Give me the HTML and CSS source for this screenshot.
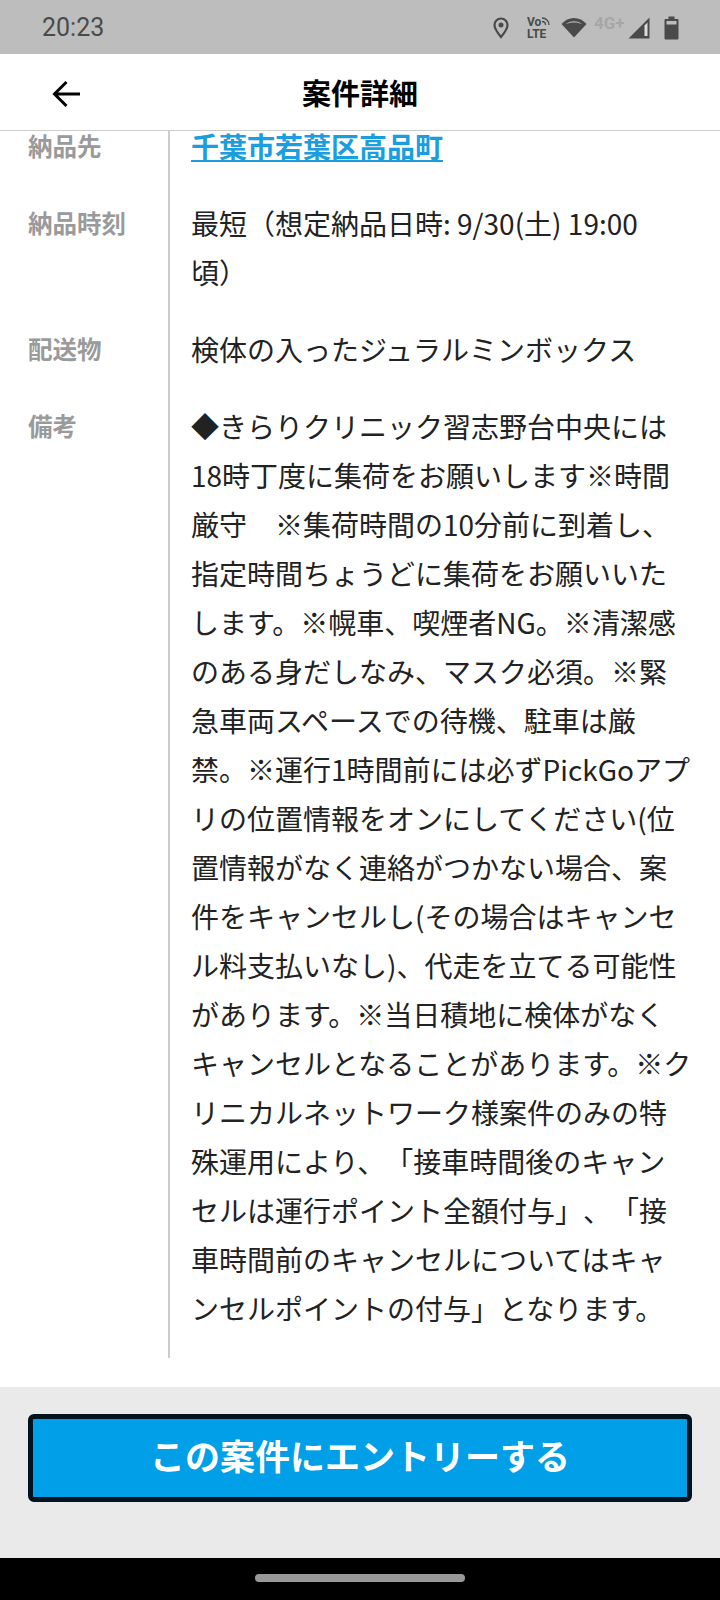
FILE: index.html
```html
<!doctype html>
<html lang="ja">

<head>
	<title>案件詳細</title>
	<meta charset="UTF-8">
	<meta name="viewport" content="width=device-width, initial-scale=1">
	<link rel="stylesheet" href="styles.css">
</head>

<body>
	<div class="Page">
		<div class="StatusBar">
			<span class="Time">20:23</span>
			<div class="StatusIcons">
				<svg class="IconPin" width="16" height="22" viewBox="0 0 16 22">
					<path d="M8 1.5C4.2 1.5 1.5 4.4 1.5 8c0 4.2 6.500 12 6.500 12s6.500-7.800 6.500-12c0-3.600-2.700-6.500-6.500-6.500z" fill="none" stroke="#4a4a4a" stroke-width="2.200" />
					<circle cx="8" cy="8" r="2.500" fill="#4a4a4a" />
				</svg>
				<div class="VoLte">
					<span class="VoLine">Vo<svg width="9" height="9" viewBox="0 0 9 9">
							<path d="M1 1c4 0 7 3 7 7M1 4.500c2 0 3.500 1.500 3.500 3.500" fill="none" stroke="#4a4a4a" stroke-width="1.300" />
						</svg></span>
					<span>LTE</span>
				</div>
				<svg class="IconWifi" width="26" height="21" viewBox="0 0 26 21">
					<path d="M0.500 7C4 3 8.300 1 13 1s9 2 12.500 6L13 20.500z" fill="#4a4a4a" />
					<path d="M4.500 7.200C7 5.200 9.900 4.200 13 4.200s6 1 8.500 3C18.800 6 16 5.500 13 5.500S7.200 6 4.500 7.200z" fill="#bdbdbd" />
				</svg>
				<span class="FourG">4G+</span>
				<svg class="IconSignal" width="22" height="22" viewBox="0 0 22 22">
					<path d="M0.500 21.500L21.500 0.500v21z" fill="#4a4a4a" />
					<path d="M16.500 8.500v10.500h3V5.500z" fill="#dcdcdc" />
				</svg>
				<svg class="IconBattery" width="15" height="24" viewBox="0 0 15 24">
					<path d="M4.500 0.500h6v2.500h3a1 1 0 0 1 1 1v18.500a1 1 0 0 1-1 1h-12a1 1 0 0 1-1-1V4a1 1 0 0 1 1-1h3z" fill="#4a4a4a" />
					<rect x="2.500" y="5" width="10" height="3.500" fill="#bdbdbd" />
				</svg>
			</div>
		</div>

		<div class="Header">
			<svg class="BackArrow" width="30" height="28" viewBox="0 0 30 28">
				<path d="M28 14H3M14.500 2L2.500 14l12 12" fill="none" stroke="#000" stroke-width="3" />
			</svg>
			<span class="Title">案件詳細</span>
		</div>

		<div class="Main">
			<div class="Details">
				<div class="Label">納品先</div>
				<div class="Value"><a class="Link" href="#">千葉市若葉区高品町</a></div>

				<div class="Label">納品時刻</div>
				<div class="Value">最短（想定納品日時: 9/30(土) 19:00頃）</div>

				<div class="Label">配送物</div>
				<div class="Value">検体の入ったジュラルミンボックス</div>

				<div class="Label">備考</div>
				<div class="Value Last">◆きらりクリニック習志野台中央には18時丁度に集荷をお願いします※時間厳守　※集荷時間の10分前に到着し、指定時間ちょうどに集荷をお願いいたします。※幌車、喫煙者NG。※清潔感のある身だしなみ、マスク必須。※緊急車両スペースでの待機、駐車は厳<br>禁。※運行1時間前には必ずPickGoアプリの位置情報をオンにしてください(位置情報がなく連絡がつかない場合、案件をキャンセルし(その場合はキャンセル料支払いなし)、代走を立てる可能性があります。※当日積地に検体がなく<span class="NoWrap">キャンセルとなることがあります。※ク</span>リニカルネットワーク様案件のみの特殊運用により、「接車時間後のキャンセルは運行ポイント全額付与」、「接車時間前のキャンセルについてはキャンセルポイントの付与」となります。</div>
			</div>
		</div>

		<div class="Footer">
			<button class="Entry" type="button">この案件にエントリーする</button>
		</div>

		<div class="NavBar">
			<div class="HomePill"></div>
		</div>
	</div>
</body>

</html>
```
FILE: styles.css
```css
* {
	box-sizing: border-box;
}

body {
	margin: 0;
	font-family: "Noto Sans CJK JP", "Noto Sans", sans-serif;
	color: #222;
	text-spacing-trim: space-all;
}

.Page {
	display: flex;
	flex-direction: column;
	height: 1600px;
	background-color: white;
}

/* status bar */
.StatusBar {
	display: flex;
	align-items: center;
	justify-content: space-between;
	height: 54px;
	padding: 1px 41px 0 42px;
	background-color: #bdbdbd;
}

.Time {
	font-family: Roboto, sans-serif;
	font-size: 25px;
	color: #4a4a4a;
}

.StatusIcons {
	display: flex;
	align-items: center;
}

.IconPin {
	margin-right: 18px;
}

.VoLte {
	display: flex;
	flex-direction: column;
	width: 24px;
	margin-right: 10px;
	font-family: Roboto, sans-serif;
	font-size: 12px;
	font-weight: bold;
	line-height: 12px;
	color: #4a4a4a;
}

.VoLine {
	display: flex;
	align-items: center;
}

.IconWifi {
	margin-right: 7px;
}

.FourG {
	width: 30px;
	margin-right: 4px;
	margin-bottom: 10px;
	font-family: Roboto, sans-serif;
	font-size: 17px;
	font-weight: bold;
	color: #a6a6a6;
}

.IconSignal {
	margin-right: 14px;
}

/* header */
.Header {
	display: flex;
	align-items: center;
	justify-content: center;
	position: relative;
	height: 77px;
	border-bottom: 1px solid #ccc;
}

.BackArrow {
	position: absolute;
	left: 52px;
	top: 26px;
}

.Title {
	font-size: 29px;
	font-weight: bold;
	color: black;
}

/* details */
.Main {
	flex: 1;
	overflow: hidden;
}

.Details {
	display: grid;
	grid-template-columns: 168px 1fr;
	margin-top: -24px;
	font-size: 28px;
	line-height: 49px;
}

.Label {
	padding: 14px 0 14px 28px;
	font-size: 24.5px;
	font-weight: bold;
	color: #9a9a9a;
}

.Value {
	padding: 15px 28px 13px 21px;
	border-left: 2px solid #ccc;
}

.Value.Last {
	padding-bottom: 25px;
}

.NoWrap {
	white-space: nowrap;
}

.Link {
	font-weight: bold;
	color: #1a9ee0;
}

/* entry button */
.Footer {
	height: 171px;
	padding: 27px 28px 0 28px;
	background-color: #eaeaea;
}

.Entry {
	display: block;
	width: 100%;
	height: 88px;
	padding: 0 0 7px 0;
	border: 5px solid #00131f;
	border-radius: 6px;
	background-color: #009fe8;
	font-family: inherit;
	font-size: 35px;
	font-weight: bold;
	color: white;
}

/* android nav bar */
.NavBar {
	display: flex;
	justify-content: center;
	height: 42px;
	padding-top: 16px;
	background-color: black;
}

.HomePill {
	width: 210px;
	height: 8px;
	border-radius: 4px;
	background-color: #999;
}
```
